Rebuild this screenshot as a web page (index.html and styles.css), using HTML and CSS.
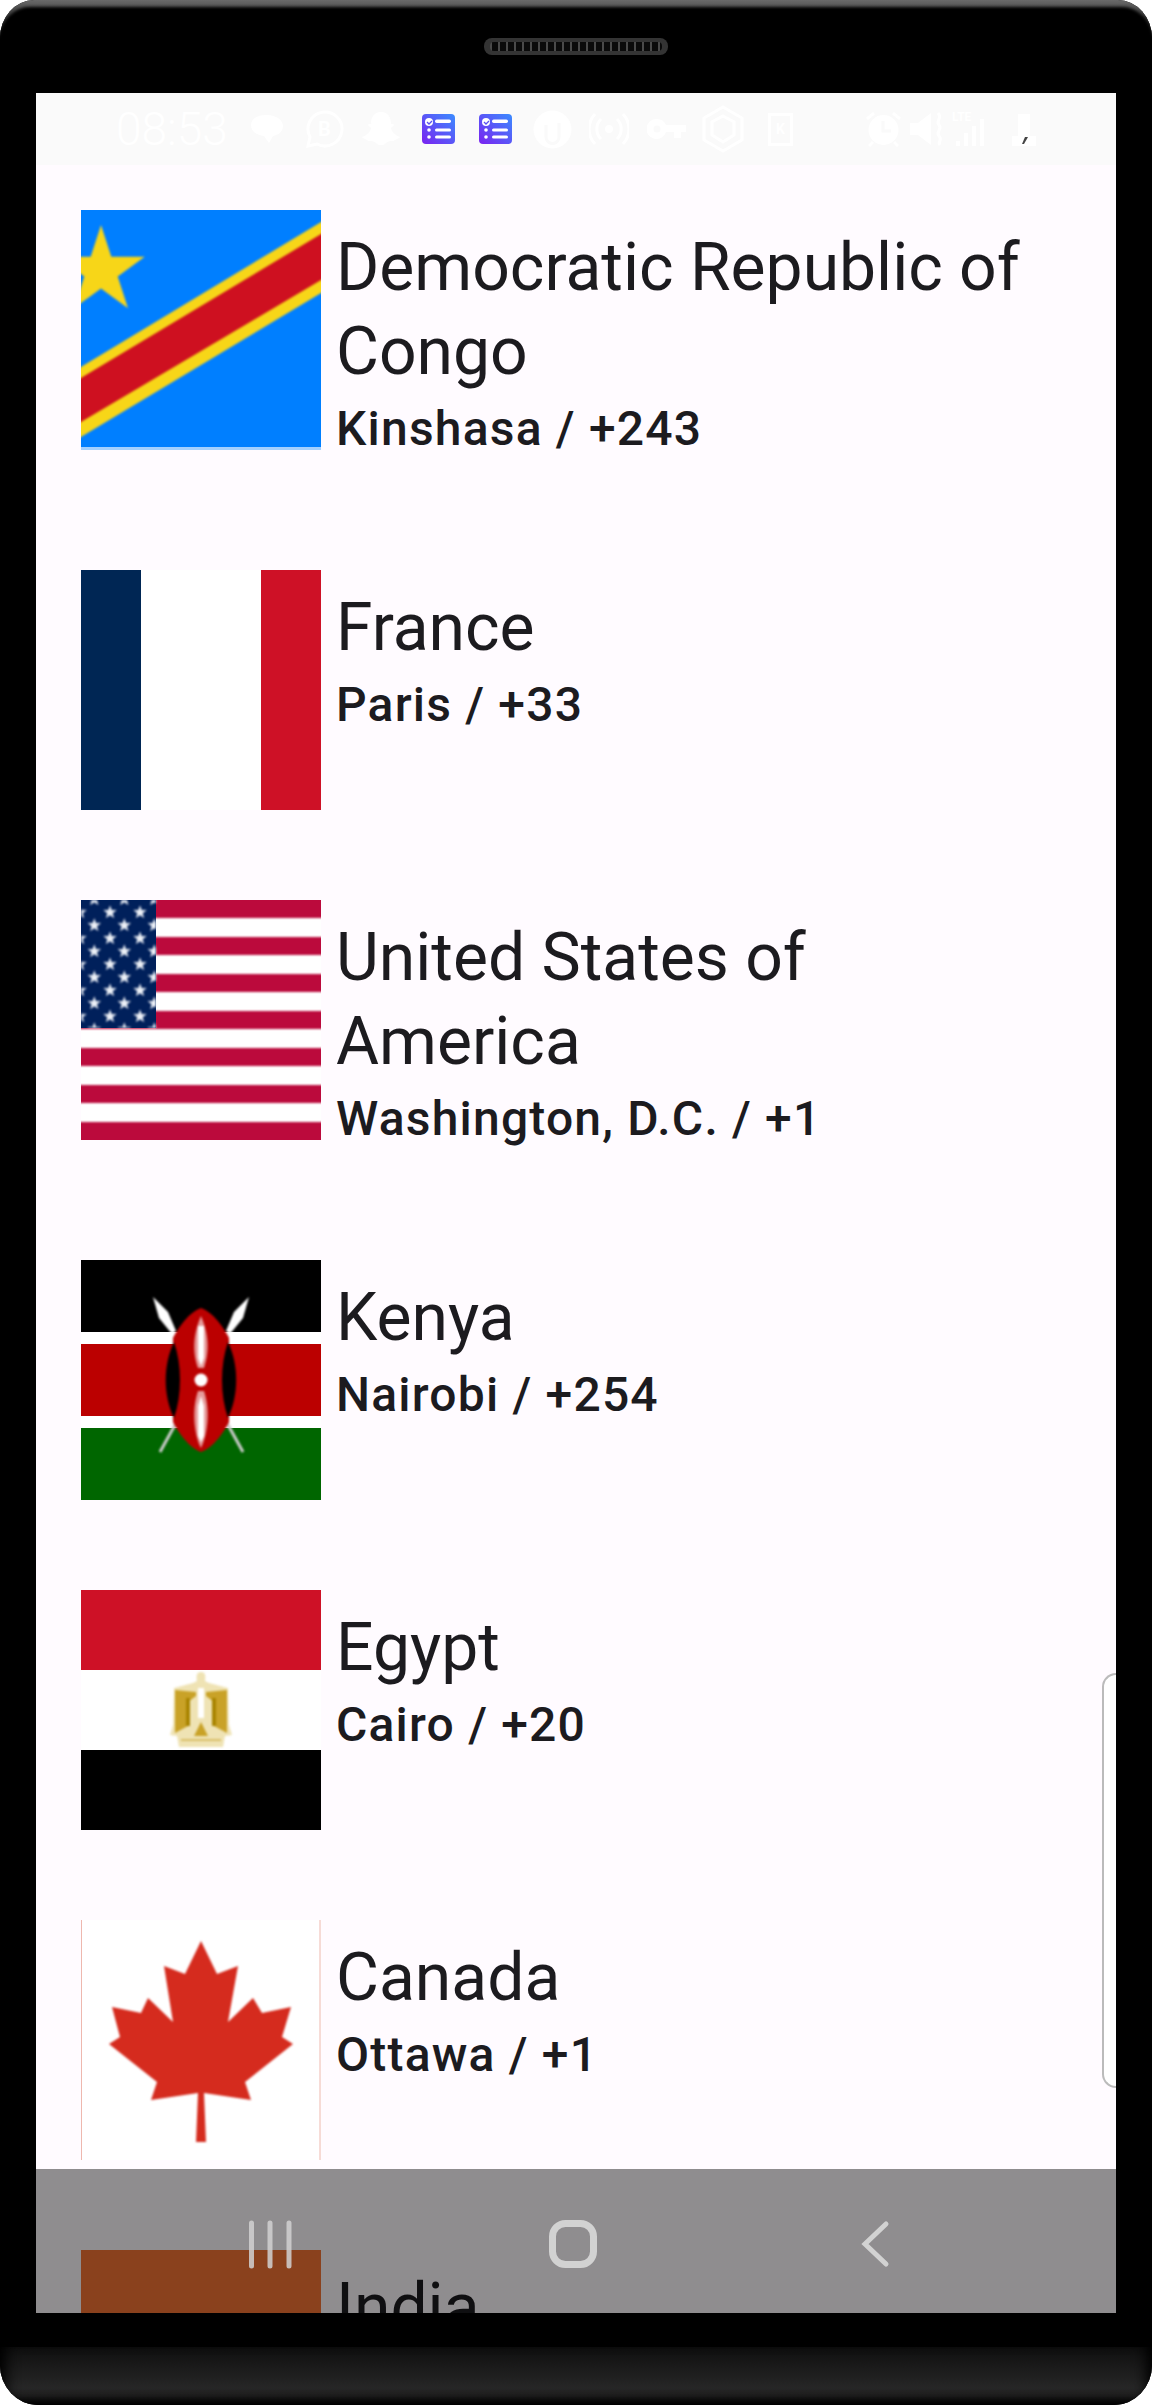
FILE: index.html
```html
<!DOCTYPE html>
<html lang="en">
<head>
<meta charset="utf-8">
<title>Countries</title>
<link rel="stylesheet" href="styles.css">
</head>
<body>
<div class="device">
  <div class="bezel-top">
    <div class="speaker"><div class="speaker-holes"></div></div>
  </div>
  <main class="screen">
    <header class="status">
      <span class="time">08:53</span>
      <div class="status-left">
        <svg class="si" width="33" height="30" viewBox="0 0 33 30"><path class="w" d="M16 1c9 0 16 5 16 11s-5 9-10 10l-4 7-5-7C6 21 0 18 0 11S7 1 16 1z"/></svg>
        <svg class="si g21" width="39" height="39" viewBox="0 0 39 39"><path class="wl" d="M3 36l2-9A17 17 0 1 1 12 34z"/><text x="19.500" y="26" class="mini" text-anchor="middle">B</text></svg>
        <svg class="si g17" width="40" height="36" viewBox="0 0 38 36"><path class="w" d="M19 1c7 0 10 5 10 12 2 0 3 0 3 1s-3 2-3 3c1 5 6 8 9 9-1 2-5 2-6 4-3 0-6 0-8 2-3 3-7 3-10 0-2-2-5-2-8-2-1-2-5-2-6-4 3-1 8-4 9-9 0-1-3-2-3-3s1-1 3-1C9 6 12 1 19 1z"/></svg>
        <svg class="si g21" width="33" height="30" viewBox="0 0 33 30"><use href="#task-icon"/></svg>
        <svg class="si g24" width="33" height="30" viewBox="0 0 33 30"><use href="#task-icon"/></svg>
        <svg class="si g21" width="39" height="39" viewBox="0 0 39 39"><circle class="w" cx="19.500" cy="19.500" r="19"/><path class="clip" d="M13 15v12a6.500 6.500 0 0 0 13 0V13"/></svg>
        <svg class="si g17" width="40" height="34" viewBox="0 0 40 34"><circle class="w" cx="20" cy="17" r="4"/><path class="wl" d="M12 7a14 14 0 0 0 0 20M28 7a14 14 0 0 1 0 20M6 2a22 22 0 0 0 0 30M34 2a22 22 0 0 1 0 30"/></svg>
        <svg class="si g18" width="39" height="22" viewBox="0 0 39 22"><path class="w" d="M10 1a10 10 0 0 1 9 6h20v7h-5v6h-7v-6h-8a10 10 0 1 1-9-13z"/><circle class="hole" cx="10" cy="11" r="3.500"/></svg>
        <svg class="si g16" width="42" height="48" viewBox="0 0 42 48"><path class="wl" d="M21 2l19 11v22L21 46 2 35V13zM21 11l11 6v13l-11 7-11-7V17z"/></svg>
        <svg class="si g24" width="25" height="33" viewBox="0 0 25 33"><rect class="wl" x="1.500" y="1.500" width="22" height="30"/><text x="12.500" y="21" class="mini small" text-anchor="middle">K</text></svg>
      </div>
      <div class="status-right">
        <svg class="si" width="37" height="36" viewBox="0 0 37 36"><circle class="w" cx="18.500" cy="19" r="15"/><path class="wl" d="M2 8l7-6M35 8l-7-6M8 31l-4 4M29 31l4 4"/><path class="clip" d="M18 10v10h8"/></svg>
        <svg class="si g8" width="35" height="36" viewBox="0 0 35 36"><path class="w" d="M0 12h8L21 2v32L8 24H0z"/><path class="wl" d="M28 2c5 5-3 8 1 12s-4 7 0 11-2 6 1 9"/></svg>
        <svg class="si g7" width="33" height="36" viewBox="0 0 33 36"><text x="0" y="10" class="lte">LTE</text><path class="bars" d="M6 35v-5M14 35V22M22 35V15M30 35V8"/></svg>
        <svg class="si g27" width="24" height="34" viewBox="0 0 24 34"><path class="w" d="M6 2h12v22H6z"/><rect class="w" x="0" y="24" width="24" height="10"/><path class="tick" d="M10 32l3-7h3l-4 7z"/></svg>
      </div>
    </header>

    <section class="list">
      <article class="country">
        <svg class="flag" viewBox="0 0 240 240" preserveAspectRatio="none" role="img" aria-label="Flag">
          <rect width="240" height="240" fill="#007fff"/>
          <rect y="237" width="240" height="3" fill="#a3d0ff"/>
          <g class="soft">
            <polygon fill="#f7d618" points="20,15 30.300,46.800 63.700,46.800 36.700,66.400 47,98.200 20,78.600 -7,98.200 3.300,66.400 -23.700,46.800 9.700,46.800"/>
            <polygon fill="#f7d618" points="-10,163 250,6 250,77 -10,233"/>
            <polygon fill="#ce1020" points="-10,174 250,18 250,64 -10,218"/>
          </g>
        </svg>
        <div class="info">
          <h2 class="name">Democratic Republic of Congo</h2>
          <p class="sub">Kinshasa / +243</p>
        </div>
      </article>

      <article class="country">
        <svg class="flag" viewBox="0 0 240 240" preserveAspectRatio="none" role="img" aria-label="Flag">
          <rect width="60" height="240" fill="#002654"/>
          <rect x="60" width="120" height="240" fill="#fff"/>
          <rect x="180" width="60" height="240" fill="#ce1126"/>
        </svg>
        <div class="info">
          <h2 class="name">France</h2>
          <p class="sub">Paris / +33</p>
        </div>
      </article>

      <article class="country">
        <svg class="flag" viewBox="0 0 240 240" preserveAspectRatio="none" role="img" aria-label="Flag">
          <defs>
            <polygon id="us-star" fill="#eef2f8" points="0,-7 1.700,-2.200 6.800,-2.200 2.700,.9 4.200,5.800 0,2.900 -4.200,5.800 -2.700,.9 -6.800,-2.200 -1.700,-2.200"/>
            <pattern id="us-stars" x="-8" y="5.800" width="30" height="26" patternUnits="userSpaceOnUse">
              <use href="#us-star" x="7" y="6.500"/>
              <use href="#us-star" x="21.300" y="19.500"/>
            </pattern>
          </defs>
          <rect width="240" height="240" fill="#fff"/>
          <g fill="#bb0a3c" class="soft-s">
            <rect x="-5" y="-5" width="250" height="23"/>
            <rect x="-5" y="37" width="250" height="18"/>
            <rect x="-5" y="74" width="250" height="18"/>
            <rect x="-5" y="111" width="250" height="18"/>
            <rect x="-5" y="148" width="250" height="18"/>
            <rect x="-5" y="185" width="250" height="18"/>
            <rect x="-5" y="222" width="250" height="23"/>
          </g>
          <rect x="-5" y="-5" width="80" height="133" fill="#00205b"/>
          <rect width="75" height="128" fill="url(#us-stars)" class="soft-s"/>
        </svg>
        <div class="info">
          <h2 class="name">United States of America</h2>
          <p class="sub">Washington, D.C. / +1</p>
        </div>
      </article>

      <article class="country">
        <svg class="flag" viewBox="0 0 240 240" preserveAspectRatio="none" role="img" aria-label="Flag">
          <rect width="240" height="72" fill="#000"/>
          <rect y="72" width="240" height="12" fill="#fff"/>
          <rect y="84" width="240" height="72" fill="#bb0000"/>
          <rect y="156" width="240" height="12" fill="#fff"/>
          <rect y="168" width="240" height="72" fill="#006600"/>
          <g class="soft-s">
            <polygon fill="#fff" points="72,37 87,52 95,71 91,74 78,58"/>
            <polygon fill="#fff" points="168,37 153,52 145,71 149,74 162,58"/>
            <path stroke="#ccc" stroke-width="3" fill="none" d="M79 192l16-29M162 192l-16-29"/>
            <path fill="#bb0000" d="M120 48C108 52 97 68 92 78V162C97 172 108 188 120 192C132 188 143 172 148 162V78C143 68 132 52 120 48z"/>
            <path fill="#000" d="M93 82C82 105 82 135 93 158C101 135 101 105 93 82zM147 82C158 105 158 135 147 158C139 135 139 105 147 82z"/>
            <path fill="#e59a9a" d="M120 56c6 14 10 32 3 52h-6c-7-20-3-38 3-52zM120 188c-6-12-10-36-3-57h6c7 21 3 45-3 57z"/>
            <path fill="#fff" d="M117 66h6v32l-3 8-3-8zM117 146l3-10 3 10v30l-3 6-3-6z"/>
            <circle cx="120" cy="120" r="6.500" fill="#fff"/>
          </g>
        </svg>
        <div class="info">
          <h2 class="name">Kenya</h2>
          <p class="sub">Nairobi / +254</p>
        </div>
      </article>

      <article class="country">
        <svg class="flag" viewBox="0 0 240 240" preserveAspectRatio="none" role="img" aria-label="Flag">
          <rect width="240" height="80" fill="#ce1126"/>
          <rect y="80" width="240" height="80" fill="#fff"/>
          <rect y="160" width="240" height="80" fill="#000"/>
          <g class="soft-s">
            <path fill="#efe3b4" d="M120 82c4 0 5 3 4 9l4 2 19 5 1 37 3 10-7 1-2 11H98l-2-11-7-1 3-10 1-37 19-5 4-2c-1-6 0-9 4-9z"/>
            <path fill="#c9a227" d="M94 100l21 2v4l-8 6v24l-13 7zM146 100l-21 2v4l8 6v24l13 7z"/>
            <path fill="#a88400" d="M105 108h4v28h-4zM131 108h4v28h-4z"/>
            <path fill="#fff" d="M117 98h6v30h-6z"/>
            <path fill="#c9a227" d="M113 146l7-14 7 14z"/>
            <path fill="#d9bf68" d="M100 149h40v2h-40z"/>
          </g>
        </svg>
        <div class="info">
          <h2 class="name">Egypt</h2>
          <p class="sub">Cairo / +20</p>
        </div>
      </article>

      <article class="country">
        <svg class="flag" viewBox="0 0 240 240" preserveAspectRatio="none" role="img" aria-label="Flag">
          <rect width="240" height="240" fill="#fff"/>
          <path d="M.5 0v240M239 0v240" stroke="#eeb8ae" stroke-width="1" fill="none"/>
          <polygon class="soft-s" fill="#d52b1e" points="120,21 136,54 157,46 147,102 172,78 181,93 210,87 201,117 212,124 164,162 170,180 123,173 125,222 115,222 117,173 70,180 76,162 28,124 39,117 31,87 60,93 67,78 92,102 83,46 104,54"/>
        </svg>
        <div class="info">
          <h2 class="name">Canada</h2>
          <p class="sub">Ottawa / +1</p>
        </div>
      </article>

      <article class="country">
        <svg class="flag" viewBox="0 0 240 240" preserveAspectRatio="none" role="img" aria-label="Flag">
          <rect width="240" height="80" fill="#f67535"/>
          <rect y="80" width="240" height="80" fill="#fff"/>
          <rect y="160" width="240" height="80" fill="#138808"/>
        </svg>
        <div class="info">
          <h2 class="name">India</h2>
          <p class="sub">New Delhi / +91</p>
        </div>
      </article>
    </section>

    <div class="scroll-handle"></div>

    <nav class="navbar" aria-label="Navigation">
      <svg width="44" height="49" viewBox="0 0 44 49" class="nav-recent"><path d="M3.500 3v43M22 3v43M41 3v43"/></svg>
      <svg width="48" height="48" viewBox="0 0 48 48" class="nav-home"><rect x="3.500" y="3.500" width="41" height="41" rx="13"/></svg>
      <svg width="34" height="50" viewBox="0 0 34 50" class="nav-back"><path d="M28 5L7 25l21 20"/></svg>
    </nav>
  </main>
  <div class="chin"></div>
</div>

<svg class="sprites" width="0" height="0" aria-hidden="true">
  <defs>
    <linearGradient id="task-grad" x1="1" y1="0" x2="0" y2="1">
      <stop offset="0" stop-color="#3a8cff"/>
      <stop offset="1" stop-color="#7a22f0"/>
    </linearGradient>
    <g id="task-icon">
      <rect width="33" height="30" rx="4" fill="url(#task-grad)"/>
      <circle cx="7" cy="8" r="4" fill="#fff"/>
      <path d="M5 8l2 2 3-3" fill="none" stroke="#5a50f0" stroke-width="1.300"/>
      <rect x="13" y="5.500" width="16" height="3.500" rx="1.700" fill="#fff"/>
      <circle cx="7" cy="16" r="1.800" fill="#fff"/>
      <rect x="13" y="14.500" width="16" height="3" rx="1.500" fill="#fff"/>
      <circle cx="7" cy="23" r="1.800" fill="#fff"/>
      <rect x="13" y="21.500" width="16" height="3" rx="1.500" fill="#fff"/>
    </g>
  </defs>
</svg>
</body>
</html>
```
FILE: styles.css
```css
* { box-sizing: border-box; }
html, body { margin: 0; padding: 0; background: #fff; }
.sprites { position: absolute; }

.device {
  width: 1152px;
  height: 2405px;
  background: #000;
  border-radius: 34px 34px 38px 38px / 38px 38px 40px 40px;
  display: flex;
  flex-direction: column;
  align-items: center;
  overflow: hidden;
  position: relative;
}
.bezel-top {
  height: 93px;
  width: 100%;
  flex: none;
  display: flex;
  justify-content: center;
  padding-top: 38px;
  position: relative;
  background: linear-gradient(#6a6a6a, #444 12px, #000 40px);
}
.bezel-top::before {
  content: "";
  position: absolute;
  left: 0;
  right: 0;
  top: 7px;
  bottom: 0;
  background: #000;
  border-radius: 30px 30px 0 0 / 32px 32px 0 0;
  filter: blur(1.500px);
}
.speaker {
  width: 184px;
  height: 17px;
  border-radius: 8px;
  background: #343434;
  padding: 4px 6px;
  position: relative;
}
.speaker-holes {
  height: 9px;
  border-radius: 4px;
  background: repeating-linear-gradient(90deg, #4a4a4a 0 1.500px, #0a0a0a 1.500px 8px);
}

.screen {
  width: 1080px;
  height: 2220px;
  flex: none;
  background: #fffbff;
  position: relative;
  overflow: hidden;
  display: flex;
  flex-direction: column;
}
.status {
  height: 72px;
  flex: none;
  background: #fafafa;
  display: flex;
  align-items: center;
  padding-left: 80px;
  padding-right: 80px;
}
.time {
  font: 300 46px/1 Roboto, sans-serif;
  color: #fff;
  margin-right: 23px;
}
.status-left, .status-right { display: flex; align-items: center; }
.status-right { margin-left: auto; }
.si { flex: none; display: block; }
.g7 { margin-left: 7px; }
.g8 { margin-left: 8px; }
.g16 { margin-left: 16px; }
.g17 { margin-left: 17px; }
.g18 { margin-left: 18px; }
.g21 { margin-left: 21px; }
.g24 { margin-left: 24px; }
.g27 { margin-left: 27px; }
.w { fill: #fff; }
.hole { fill: #fafafa; }
.wl { fill: none; stroke: #fff; stroke-width: 3; }
.clip { fill: none; stroke: #fafafa; stroke-width: 3; }
.bars { fill: none; stroke: #fff; stroke-width: 4; }
.tick { fill: #444; }
.mini { font: 700 20px Roboto, sans-serif; fill: #fff; }
.mini.small { font-size: 14px; }
.lte { font: 700 12px Roboto, sans-serif; fill: #fff; }

.list {
  flex: none;
  padding: 45px 0 0 45px;
}
.country {
  display: flex;
  align-items: flex-start;
  gap: 15px;
  padding-bottom: 90px;
}
.flag {
  width: 240px;
  height: 240px;
  flex: none;
  display: block;
  overflow: hidden;
}
.soft { filter: blur(.8px); }
.soft-s { filter: blur(.8px); }
.info { width: 710px; padding: 15.500px 0 16.500px; }
.name {
  margin: 0;
  font: 400 66px/84px Roboto, sans-serif;
  color: #1c1b1f;
}
.sub {
  margin: 0;
  font: 500 48px/70px Roboto, sans-serif;
  letter-spacing: 1.200px;
  color: #1c1b1f;
}

.scroll-handle {
  position: absolute;
  right: 0;
  top: 1580px;
  width: 14px;
  height: 415px;
  background: #fff;
  border: 2px solid #bbb;
  border-right: 0;
  border-radius: 14px 0 0 14px;
}

.navbar {
  position: absolute;
  left: 0;
  right: 0;
  bottom: 0;
  height: 144px;
  background: rgba(0, 0, 0, .44);
}
.navbar svg { position: absolute; fill: none; stroke: #d2d2d2; }
.nav-recent { left: 212px; top: 51px; stroke-width: 5; stroke-linecap: round; opacity: .85; }
.nav-home { left: 513px; top: 51px; stroke-width: 7; }
.nav-back { left: 822px; top: 50px; stroke-width: 5; stroke-linecap: round; }

.chin {
  flex: none;
  margin-top: 34px;
  width: 100%;
  height: 58px;
  background: linear-gradient(#0f0f0f, #262626 70%, #191919);
  box-shadow: inset 14px 0 14px -8px #000, inset -14px 0 14px -8px #000, inset 0 -9px 8px -4px #000;
}
```
